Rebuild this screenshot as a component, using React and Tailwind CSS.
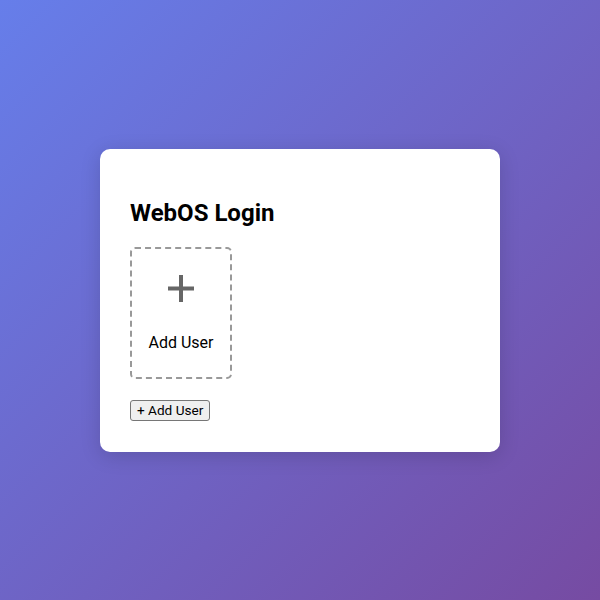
import React from 'react'

const App = () => {
  return (
    <div
      className="w-full h-[600px] flex items-center justify-center bg-[linear-gradient(135deg,#667eea_0%,#764ba2_100%)]"
      style={{ fontFamily: 'Roboto, "Liberation Sans", sans-serif' }}
    >
      <div className="w-[400px] bg-white rounded-[10px] shadow-[0_4px_20px_rgba(0,0,0,0.15)] p-[30px]">
        <h2 className="text-[24px] font-bold leading-[28px] mt-[20px] mb-[20px] text-black">WebOS Login</h2>

        {/* user tiles */}
        <div className="flex gap-4">
          <div className="w-[102px] h-[132px] border-2 border-dashed border-[#999] rounded-[5px] flex flex-col items-center pt-[26px] cursor-pointer">
            <svg width="26" height="27" viewBox="0 0 26 27" className="text-[#666]">
              <rect x="11" y="0" width="4" height="27" fill="currentColor" />
              <rect x="0" y="11.5" width="26" height="4" fill="currentColor" />
            </svg>
            <div className="mt-[29px] text-[16px] leading-[24px] text-black">Add User</div>
          </div>
        </div>

        <button className="mt-[21px] h-[21px] px-[6px] text-[13.6px] leading-[17px] text-black bg-[#efefef] border border-[#767676] rounded-[3px]">
          + Add User
        </button>
      </div>
    </div>
  )
}

export default App
